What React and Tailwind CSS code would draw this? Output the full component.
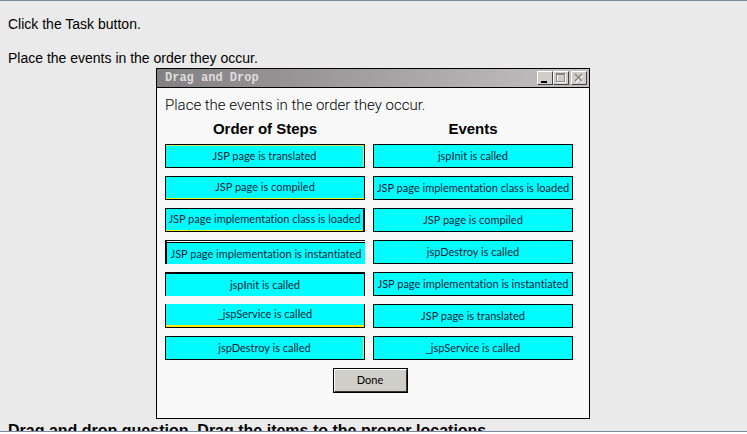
const steps = [
  { text: "JSP page is translated", box: "border", accent: "border-t border-r border-[#c8e860]", label: "" },
  { text: "JSP page is compiled", box: "border", accent: "border-b border-[#f4f000]", label: "" },
  { text: "JSP page implementation class is loaded", box: "border border-r-2", accent: "border-b border-[#f4f000]", label: "" },
  { text: "JSP page implementation is instantiated", box: "border-t border-l-2", accent: "border-t border-white", label: "border-t border-black pt-[2px]" },
  { text: "jspInit is called", box: "border-x border-t-2", accent: "", label: "" },
  { text: "_jspService is called", box: "border-x border-b", accent: "border-b-2 border-[#ffe800]", label: "" },
  { text: "jspDestroy is called", box: "border", accent: "border-r border-[#c8e860]", label: "" },
];

const events = [
  "jspInit is called",
  "JSP page implementation class is loaded",
  "JSP page is compiled",
  "jspDestroy is called",
  "JSP page implementation is instantiated",
  "JSP page is translated",
  "_jspService is called",
];

function Tile({ text, box = "border", accent = "", label = "" }) {
  return (
    <li draggable className={`flex h-6 border-black bg-[#00fcfc] font-[Lato,sans-serif] text-[11px] leading-none text-[#06243a] [font-variant-ligatures:none] ${box}`}>
      <span className={`flex flex-1 ${accent}`}>
        <span className={`flex flex-1 items-center justify-center pb-[2px] whitespace-nowrap ${label}`}>{text}</span>
      </span>
    </li>
  );
}

function Column({ title, children }) {
  return (
    <section className="w-[200px]">
      <h2 className="text-center text-[15px] leading-5 font-bold text-black">{title}</h2>
      <ul className="mt-[5px] flex flex-col gap-2">{children}</ul>
    </section>
  );
}

function WindowButton({ label, children }) {
  return (
    <button
      type="button"
      aria-label={label}
      className="h-[14px] w-4 border border-t-white border-l-white border-r-[#444] border-b-[#444] bg-[#d0cec8]"
    >
      <svg viewBox="0 0 14 12" className="block h-3 w-[14px]" fill="none" shapeRendering="crispEdges">
        {children}
      </svg>
    </button>
  );
}

function TaskDialog() {
  return (
    <section
      role="dialog"
      aria-label="Drag and Drop"
      className="mx-auto mt-px w-[434px] max-w-full border border-black bg-[#f8f8f8]"
    >
      <header className="flex h-[19px] items-center border-b border-black bg-linear-to-r from-[#828080] to-[#c4c2c2] pr-[2px] pl-2">
        <h1 className="flex-1 font-['Liberation_Mono',monospace] text-[12px] leading-4 font-bold text-[#dedcdc]">
          Drag and Drop
        </h1>
        <WindowButton label="Minimize">
          <path d="M3 9h6v2H3z" fill="#000" />
        </WindowButton>
        <WindowButton label="Maximize">
          <path d="M3.5 2.5h8v8h-8z" stroke="#fff" />
          <path d="M2.5 1.5h8v8h-8zM2 2.5h9" stroke="#8a8883" />
        </WindowButton>
        <span className="w-[2px]" />
        <WindowButton label="Close">
          <path d="M4 3l7 7M11 3l-7 7" stroke="#fff" strokeWidth="1.5" shapeRendering="auto" />
          <path d="M3 2l7 7M10 2l-7 7" stroke="#85837e" strokeWidth="1.5" shapeRendering="auto" />
        </WindowButton>
      </header>
      <div className="pt-[7px] pr-[14px] pb-[25px] pl-2">
        <p className="font-[Roboto,sans-serif] text-[15px] leading-5 font-light text-black">
          Place the events in the order they occur.
        </p>
        <div className="mt-1 flex gap-2">
          <Column title="Order of Steps">
            {steps.map((step) => (
              <Tile key={step.text} {...step} />
            ))}
          </Column>
          <Column title="Events">
            {events.map((event) => (
              <Tile key={event} text={event} />
            ))}
          </Column>
        </div>
        <button
          type="button"
          className="mx-auto mt-2 block h-[25px] w-[75px] border border-black bg-[#d0cec8] font-[Lato,sans-serif] text-[11px] leading-none text-black"
        >
          <span className="flex h-full items-center justify-center border border-t-white border-l-white border-r-[#333] border-b-[#333] pb-[2px]">
            Done
          </span>
        </button>
      </div>
    </section>
  );
}

export default function App() {
  return (
    <div className="h-screen bg-white pb-[2px] font-['Liberation_Sans',Arial,sans-serif]">
      <main className="h-full overflow-hidden border-y border-[#7d8a9b] bg-[#eaeaea] pt-[14px] pr-[9px] pl-2 text-[14px] leading-[18px] text-black">
        <p>Click the Task button.</p>
        <p className="mt-4">Place the events in the order they occur.</p>
        <TaskDialog />
        <p className="mt-[3px] text-[16px] font-bold whitespace-nowrap">
          Drag and drop question. Drag the items to the proper locations.
        </p>
      </main>
    </div>
  );
}
